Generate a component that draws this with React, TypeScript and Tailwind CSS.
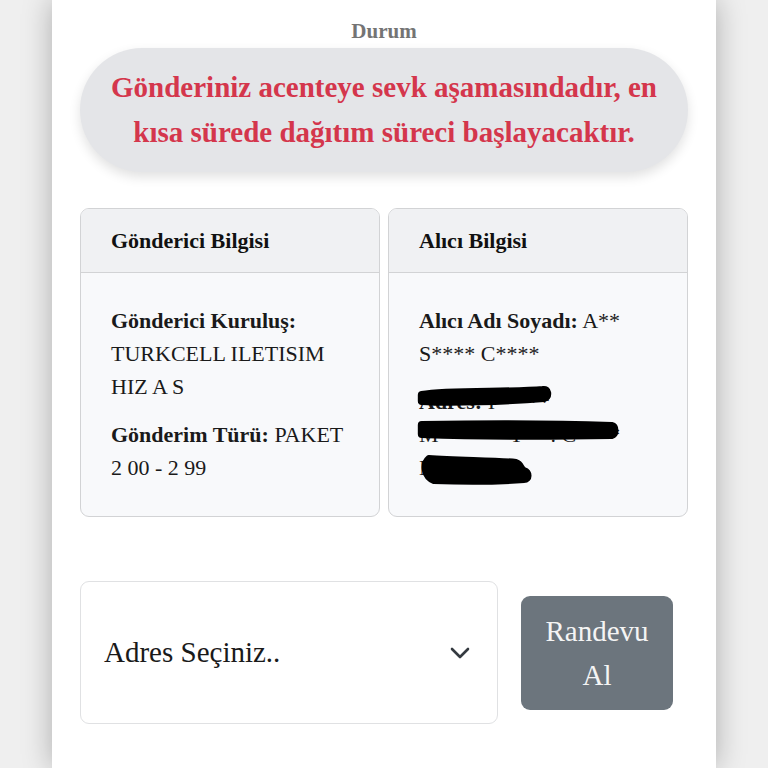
import React from 'react';

const serif = { fontFamily: '"Liberation Serif", "Times New Roman", serif' };

function Scribbles() {
  // redaction marks drawn over the address text
  return (
    <svg className="pointer-events-none absolute left-0 top-0 h-full w-full" viewBox="0 0 300 243" preserveAspectRatio="none">
      <path d="M33 122 C60 117 120 120 155 117 C160 116 161 123 156 125 C120 128 60 130 33 128 Z" fill="#000" stroke="#000" strokeWidth="8" strokeLinejoin="round" />
      <path d="M33 152 C90 151 170 151 224 153 C228 154 228 161 224 162 C170 163 90 163 33 161 Z" fill="#000" stroke="#000" strokeWidth="8" strokeLinejoin="round" />
      <path d="M40 185 C70 187 110 187 128 189 C134 191 132 195 136 197 C142 199 142 207 136 207 C110 209 70 209 45 208 C35 204 33 191 40 185 Z" fill="#000" stroke="#000" strokeWidth="6" strokeLinejoin="round" />
    </svg>
  );
}

function InfoCard({ title, children, redact }: { title: string; children: React.ReactNode; redact?: boolean }) {
  return (
    <div className="flex flex-col overflow-hidden rounded-[9px] border border-[#d2d3d5] bg-[#f8f9fb]">
      <div className="flex h-[64px] items-center border-b border-[#d2d3d5] bg-[#f0f1f3] px-[30px] text-[22px] font-bold text-[#111]">
        {title}
      </div>
      <div className="relative flex-1 px-[30px] pb-[32px] pt-[31px] text-[22px] leading-[33px] text-[#1a1a1a]">
        {children}
        {redact && <Scribbles />}
      </div>
    </div>
  );
}

export default function App() {
  return (
    <div className="min-h-screen bg-[#efefef]" style={serif}>
      <div className="mx-auto min-h-screen w-[664px] bg-white px-[28px] pt-[15px] shadow-[0_0_28px_rgba(0,0,0,0.28)]">
        <div className="text-center text-[21px] font-bold leading-[32px] text-[#747474]">Durum</div>

        <div className="mt-[1px] rounded-[62px] bg-[#e4e5e8] px-[20px] py-[17px] text-center text-[29px] font-bold leading-[45px] text-[#d4364c] shadow-[0_5px_12px_rgba(0,0,0,0.12)]">
          Gönderiniz acenteye sevk aşamasındadır, en kısa sürede dağıtım süreci başlayacaktır.
        </div>

        <div className="mt-[36px] grid grid-cols-2 gap-[8px]">
          <InfoCard title="Gönderici Bilgisi">
            <p className="mb-[15px]">
              <b>Gönderici Kuruluş:</b> TURKCELL ILETISIM HIZ A S
            </p>
            <p>
              <b>Gönderim Türü:</b> PAKET 2 00 - 2 99
            </p>
          </InfoCard>
          <InfoCard title="Alıcı Bilgisi" redact>
            <p className="mb-[15px]">
              <b>Alıcı Adı Soyadı:</b> A** S**** C****
            </p>
            <p>
              <b>Adres:</b> I*****
              <br />
              M****** T** . C****
              <br />
              N******
            </p>
          </InfoCard>
        </div>

        <div className="mt-[64px] flex items-center pb-[40px]">
          <div className="flex h-[143px] w-[418px] items-center justify-between rounded-[9px] border border-[#e0e1e3] bg-white pl-[23px] pr-[26px]">
            <span className="text-[29px] text-[#1a1a1a]">Adres Seçiniz..</span>
            <svg width="22" height="14" viewBox="0 0 22 14" fill="none" stroke="#343a40" strokeWidth="2.6" strokeLinecap="round" strokeLinejoin="round">
              <path d="M3 3 L11 11 L19 3" />
            </svg>
          </div>
          <button className="ml-[23px] w-[152px] rounded-[9px] bg-[#6c757d] px-[14px] py-[13px] text-center text-[29px] leading-[44px] text-[#f4f4f4]">
            Randevu Al
          </button>
        </div>
      </div>
    </div>
  );
}
